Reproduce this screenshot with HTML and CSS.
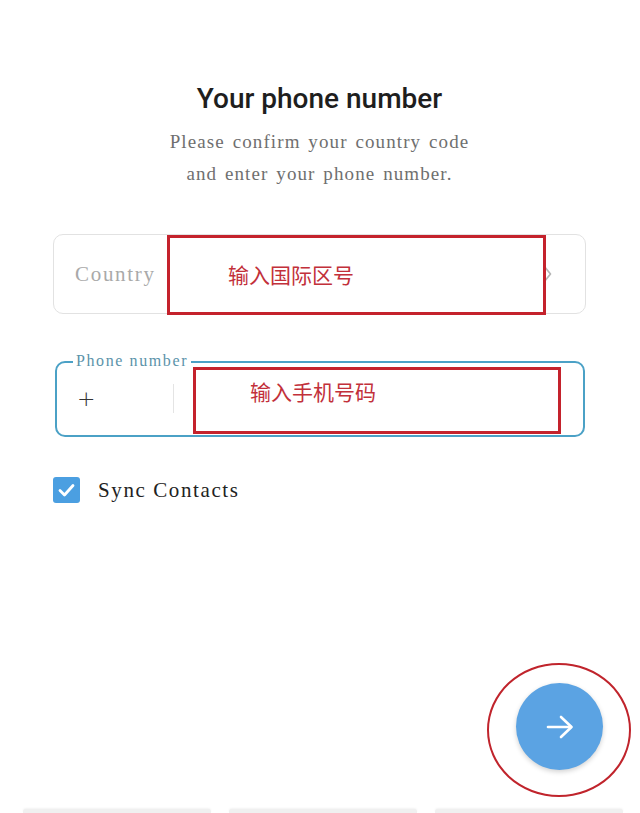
FILE: index.html
```html
<!DOCTYPE html>
<html lang="en">
<head>
<meta charset="utf-8">
<title>Your phone number</title>
<link rel="stylesheet" href="styles.css">
</head>
<body>
<div class="page">
  <main class="content">
    <h1 class="title">Your phone number</h1>
    <p class="subtitle">Please confirm your country code<br>and enter your phone number.</p>

    <div class="country-field">
      <span class="country-label">Country</span>
      <svg class="chevron" width="10" height="20" viewBox="0 0 10 20"><polyline points="2,2 8.5,10 2,18" fill="none" stroke="#b5b5b5" stroke-width="1.7" stroke-linecap="round" stroke-linejoin="round"/></svg>
      <div class="note note-country"><span>输入国际区号</span></div>
    </div>

    <div class="phone-field">
      <span class="phone-legend">Phone number</span>
      <span class="phone-prefix">+</span>
      <span class="phone-divider"></span>
      <div class="note note-phone"><span>输入手机号码</span></div>
    </div>

    <label class="sync-row">
      <span class="checkbox">
        <svg width="27" height="26" viewBox="0 0 27 26"><polyline points="7,13.5 11.5,18 20,8.5" fill="none" stroke="#fff" stroke-width="2.8" stroke-linecap="round" stroke-linejoin="round"/></svg>
      </span>
      <span class="sync-text">Sync Contacts</span>
    </label>
  </main>

  <div class="bottom-cards">
    <span class="card-edge"></span>
    <span class="card-edge"></span>
    <span class="card-edge"></span>
  </div>

  <button class="fab" aria-label="Next">
    <svg width="30" height="26" viewBox="0 0 30 26"><line x1="3" y1="13" x2="26" y2="13" stroke="#fff" stroke-width="2.6" stroke-linecap="round"/><polyline points="16,3 26.5,13 16,23" fill="none" stroke="#fff" stroke-width="2.6" stroke-linecap="round" stroke-linejoin="round"/></svg>
  </button>
  <div class="note-ellipse"></div>
</div>
</body>
</html>
```

FILE: styles.css
```css
* { box-sizing: border-box; }

html, body {
  margin: 0;
  padding: 0;
  background: #ffffff;
}

.page {
  position: relative;
  width: 640px;
  height: 813px;
  overflow: hidden;
  display: flex;
  flex-direction: column;
}

.content {
  display: flex;
  flex-direction: column;
  padding: 0 54px 0 53px;
}

.title {
  margin: 82px 0 0;
  text-align: center;
  font-family: Roboto, "Liberation Sans", sans-serif;
  font-weight: 500;
  font-size: 28px;
  line-height: 34px;
  color: #1e1e1e;
}

.subtitle {
  margin: 10px 0 0;
  text-align: center;
  font-family: "Liberation Serif", serif;
  font-size: 19px;
  line-height: 32px;
  letter-spacing: 1.1px;
  word-spacing: 2px;
  color: #6f6f6f;
}

.country-field {
  position: relative;
  margin-top: 44px;
  height: 80px;
  display: flex;
  align-items: center;
  padding: 0 33px 0 21px;
  border: 1px solid #e2e2e2;
  border-radius: 10px;
}

.country-label {
  font-family: "Liberation Serif", serif;
  font-size: 21px;
  letter-spacing: 1.7px;
  color: #a9a9a9;
}

.chevron {
  margin-left: auto;
}

.note {
  position: absolute;
  border: 3px solid #c4222c;
  font-family: "Noto Sans CJK SC", "Noto Sans", sans-serif;
  font-size: 21px;
  line-height: 28px;
  color: #c2303a;
}

.note-country {
  left: 113px;
  top: 0;
  width: 379px;
  height: 80px;
  padding: 22px 0 0 58px;
}

.phone-field {
  position: relative;
  margin: 47px 1px 0 2px;
  height: 76px;
  display: flex;
  align-items: center;
  border: 2px solid #4ba1c6;
  border-radius: 10px;
}

.phone-legend {
  position: absolute;
  left: 16px;
  top: -12px;
  padding: 0 3px;
  background: #ffffff;
  font-family: "Liberation Serif", serif;
  font-size: 16px;
  line-height: 20px;
  letter-spacing: 1.6px;
  color: #5b93aa;
}

.phone-prefix {
  width: 116px;
  padding-left: 20px;
  margin-top: -2px;
  font-family: "DejaVu Sans", sans-serif;
  font-weight: 300;
  font-size: 22px;
  color: #333;
}

.phone-divider {
  width: 1px;
  height: 29px;
  margin-top: -2px;
  background: #e4e4e4;
}

.note-phone {
  left: 136px;
  top: 4px;
  width: 368px;
  height: 67px;
  padding: 7px 0 0 54px;
}

.sync-row {
  margin-top: 40px;
  display: flex;
  align-items: center;
  gap: 18px;
}

.checkbox {
  width: 27px;
  height: 26px;
  border-radius: 3px;
  background: #4b9fe1;
  display: flex;
}

.sync-text {
  font-family: "Liberation Serif", serif;
  font-size: 21px;
  letter-spacing: 1.6px;
  color: #222;
}

.bottom-cards {
  margin-top: auto;
  display: flex;
  gap: 18px;
  padding: 0 17px 0 23px;
}

.card-edge {
  flex: 1;
  height: 4px;
  border-radius: 3px 3px 0 0;
  background: #f0f0f0;
  box-shadow: 0 -1px 2px rgba(0, 0, 0, 0.05);
}

.fab {
  position: absolute;
  left: 516px;
  top: 683px;
  width: 87px;
  height: 87px;
  border: none;
  border-radius: 50%;
  background: #5ba3e3;
  box-shadow: 0 2px 5px rgba(0, 0, 0, 0.18);
  display: flex;
  align-items: center;
  justify-content: center;
  padding: 0;
}

.note-ellipse {
  position: absolute;
  left: 487px;
  top: 663px;
  width: 144px;
  height: 134px;
  border: 2px solid #c0242c;
  border-radius: 50%;
}
```
